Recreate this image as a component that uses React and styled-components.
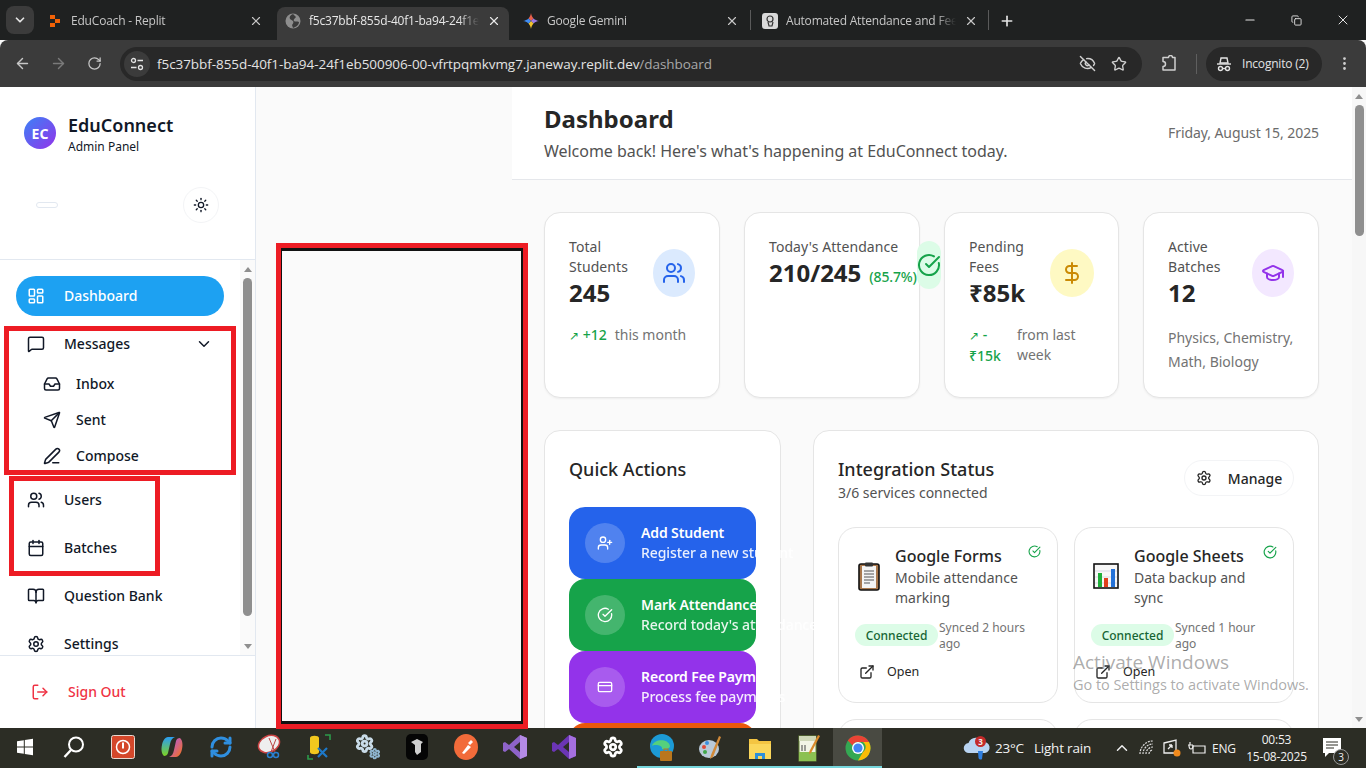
import React from 'react'
import styled, { createGlobalStyle } from 'styled-components'
import {
  ArrowLeft, ArrowRight, RotateCw, EyeOff, Star, MoreVertical, X, Plus, Minus, Copy, ChevronDown, ChevronUp,
  LayoutDashboard, MessageSquare, Inbox, Send, PenLine, Users, Calendar, BookOpen, Settings, LogOut, Sun,
  CircleCheckBig, DollarSign, GraduationCap, UserPlus, CreditCard, ExternalLink, RefreshCw,
} from 'lucide-react'

const GlobalStyle = createGlobalStyle`
  html, body { margin: 0; padding: 0; overflow: hidden; }
  * { box-sizing: border-box; }
  body { font-family: "Noto Sans", sans-serif; }
`

const Screen = styled.div`
  width: 1366px;
  height: 768px;
  display: flex;
  flex-direction: column;
  overflow: hidden;
  position: relative;
  background: #fafafa;
`

/* browser chrome */
const TabStrip = styled.div`
  height: 40px;
  flex: none;
  display: flex;
  align-items: flex-end;
  background: #1f2121;
  font-family: "Open Sans", sans-serif;
`
const TabMenu = styled.div`
  width: 28px;
  height: 28px;
  margin: 0 5px 6px 6px;
  border-radius: 8px;
  background: #3b3b3b;
  color: #e3e3e3;
  display: flex;
  align-items: center;
  justify-content: center;
`
const Tab = styled.div`
  width: 232px;
  height: 33px;
  padding: 0 8px 6px;
  display: flex;
  align-items: center;
  gap: 8px;
  border-radius: 8px 8px 0 0;
  background: ${p => (p.$active ? '#3b3b3b' : 'transparent')};
  color: ${p => (p.$active ? '#e8e8e8' : '#c7c7c7')};
`
const TabTitle = styled.div`
  flex: 1;
  min-width: 0;
  font-size: 12px;
  letter-spacing: -0.2px;
  white-space: nowrap;
  overflow: hidden;
  mask-image: linear-gradient(to right, #000 88%, transparent);
`
const TabGap = styled.div`
  width: ${p => p.$w}px;
  height: 20px;
  margin-bottom: 10px;
  display: flex;
  justify-content: center;
  &::after {
    content: '';
    width: 1px;
    background: ${p => (p.$line ? '#5a5a5a' : 'transparent')};
  }
`
const NewTab = styled.div`
  color: #e3e3e3;
  margin: 0 0 11px 8px;
  display: flex;
`
const WindowButtons = styled.div`
  margin-left: auto;
  align-self: stretch;
  display: flex;
`
const WindowButton = styled.div`
  width: 46.5px;
  display: flex;
  align-items: center;
  justify-content: center;
  color: #e3e3e3;
`
const Toolbar = styled.div`
  height: 47px;
  flex: none;
  display: flex;
  align-items: center;
  padding: 0 0 0 4px;
  background: #3b3b3b;
  border-radius: 8px 8px 0 0;
  color: #c7c7c7;
  font-family: "Open Sans", sans-serif;
`
const ToolButton = styled.div`
  width: 36px;
  display: flex;
  justify-content: center;
  opacity: ${p => (p.$dim ? 0.45 : 1)};
`
const Omnibox = styled.div`
  width: 1022px;
  height: 34px;
  margin-left: 8px;
  display: flex;
  align-items: center;
  border-radius: 17px;
  background: #282828;
  padding: 0 7px 0 4px;
`
const SiteInfo = styled.div`
  width: 26px;
  height: 26px;
  border-radius: 50%;
  background: #3b3b3b;
  display: flex;
  align-items: center;
  justify-content: center;
  color: #e3e3e3;
`
const Url = styled.div`
  margin-left: 7px;
  flex: 1;
  font-size: 13.5px;
  letter-spacing: -0.06px;
  color: #e3e3e3;
  white-space: nowrap;
`
const UrlPath = styled.span`
  color: #a8a8a8;
`
const OmniIcon = styled.div`
  width: 32px;
  display: flex;
  justify-content: center;
  color: #d0d0d0;
`
const ToolIcon = styled.div`
  width: 36px;
  margin-left: ${p => p.$ml}px;
  display: flex;
  justify-content: center;
  color: #d0d0d0;
`
const ToolDivider = styled.div`
  width: 1px;
  height: 20px;
  margin: 0 9px;
  background: #5f5f5f;
`
const IncognitoPill = styled.div`
  width: 116px;
  height: 34px;
  padding-left: 9px;
  display: flex;
  align-items: center;
  gap: 9px;
  border-radius: 17px;
  background: #282828;
  color: #e3e3e3;
  font-size: 12px;
  letter-spacing: -0.2px;
`

/* page */
const Viewport = styled.div`
  flex: 1;
  min-height: 0;
  display: flex;
`
const Sidebar = styled.aside`
  width: 256px;
  flex: none;
  display: flex;
  flex-direction: column;
  background: #fff;
  border-right: 1px solid #e2e8f0;
  color: #111827;
`
const SidebarTop = styled.div`
  height: 173px;
  flex: none;
  padding: 30px 36px 0 24px;
  border-bottom: 1px solid #e2e8f0;
`
const Brand = styled.div`
  display: flex;
  align-items: flex-start;
  gap: 12px;
`
const Avatar = styled.div`
  width: 32px;
  height: 32px;
  border-radius: 50%;
  background: linear-gradient(135deg, #3b82f6, #9333ea);
  color: #fff;
  font-size: 14px;
  font-weight: 700;
  display: flex;
  align-items: center;
  justify-content: center;
`
const BrandName = styled.div`
  font-size: 18px;
  font-weight: 600;
  line-height: 24px;
  margin-top: -4px;
`
const BrandRole = styled.div`
  font-size: 12px;
  line-height: 16px;
  margin-top: 2px;
`
const ThemeRow = styled.div`
  margin-top: 32px;
  padding-left: 12px;
  display: flex;
  align-items: center;
  justify-content: space-between;
`
const EmptyPill = styled.div`
  width: 22px;
  height: 6px;
  border: 1px solid #e2e8f0;
  border-radius: 3px;
`
const ThemeButton = styled.div`
  width: 36px;
  height: 36px;
  border-radius: 50%;
  border: 1px solid #f3f4f6;
  display: flex;
  align-items: center;
  justify-content: center;
`
const NavArea = styled.div`
  flex: 1;
  min-height: 0;
  display: flex;
`
const NavList = styled.nav`
  flex: 1;
  min-width: 0;
  overflow: hidden;
  padding: 16px 16px 0 16px;
  display: flex;
  flex-direction: column;
  gap: 8px;
`
const NavItem = styled.div`
  height: 40px;
  flex: none;
  padding: 0 11px;
  display: flex;
  align-items: center;
  gap: 19px;
  border-radius: 20px;
  font-size: 14px;
  font-weight: 500;
  line-height: 20px;
  background: ${p => (p.$active ? '#1da1f2' : 'transparent')};
  color: ${p => (p.$active ? '#fff' : '#111827')};
`
const NavLabel = styled.span`
  flex: 1;
`
const NavGroup = styled.div`
  position: relative;
  flex: none;
  margin-bottom: -2px;
  &::after {
    content: '';
    box-sizing: border-box;
    position: absolute;
    top: ${p => p.$top}px;
    left: ${p => p.$left}px;
    width: ${p => p.$w}px;
    height: ${p => p.$h}px;
    border: 5px solid #ed1c24;
    pointer-events: none;
  }
`
const SubList = styled.div`
  padding: 2px 0 0 27px;
`
const SubItem = styled.div`
  height: 36px;
  display: flex;
  align-items: center;
  gap: 15px;
  font-size: 14px;
  font-weight: 500;
  line-height: 20px;
`
const PairGroup = styled(NavGroup)`
  display: flex;
  flex-direction: column;
  gap: 8px;
  margin-bottom: 0;
`
const BarTrack = styled.div`
  width: ${p => p.$w}px;
  flex: none;
  display: flex;
  flex-direction: column;
  align-items: center;
  background: ${p => p.$bg};
  color: #8f8f8f;
`
const BarArrow = styled.div`
  height: ${p => p.$h}px;
  flex: none;
  display: flex;
  align-items: center;
`
const BarThumb = styled.div`
  width: 9px;
  height: ${p => p.$h}px;
  flex: none;
  border-radius: 5px;
  background: #8f8f8f;
`
const TriUp = styled.div`
  width: 0;
  height: 0;
  border-left: 4px solid transparent;
  border-right: 4px solid transparent;
  border-bottom: 5px solid #8f8f8f;
`
const TriDown = styled(TriUp)`
  border-bottom: 0;
  border-top: 5px solid #8f8f8f;
`
const BarFill = styled.div`
  flex: 1;
`
const SidebarFooter = styled.div`
  height: 73px;
  flex: none;
  padding: 0 0 0 31px;
  display: flex;
  align-items: center;
  gap: 19px;
  border-top: 1px solid #e2e8f0;
  color: #ef3344;
  font-size: 14px;
  font-weight: 500;
  line-height: 20px;
`
const GapColumn = styled.div`
  width: 256px;
  flex: none;
  padding: 156px 0 0 20px;
`
const BlankFrame = styled.div`
  position: relative;
  z-index: 5;
  width: 252px;
  height: 486px;
  border: 5px solid #ed1c24;
  background: #fafafa;
  box-shadow: inset 1px 3px 0 #111, inset -2px -3px 0 #111;
`
const Main = styled.main`
  flex: 1;
  min-width: 0;
  display: flex;
  flex-direction: column;
  color: #262626;
`
const PageHeader = styled.header`
  height: 93px;
  flex: none;
  padding: 16px 33px 0 32px;
  display: flex;
  justify-content: space-between;
  background: #fff;
  border-bottom: 1px solid #e5e7eb;
`
const PageTitle = styled.h1`
  margin: 0;
  font-size: 24px;
  font-weight: 700;
  line-height: 32px;
`
const PageSub = styled.p`
  margin: 4px 0 0;
  font-size: 16px;
  line-height: 24px;
  letter-spacing: -0.035px;
  color: #525252;
`
const PageDate = styled.div`
  margin-top: 20px;
  font-size: 14px;
  letter-spacing: -0.08px;
  color: #6b6b6b;
`
const Content = styled.div`
  flex: 1;
  min-height: 0;
  padding: 32px 33px 0 32px;
  overflow: hidden;
`
const StatGrid = styled.div`
  display: grid;
  grid-template-columns: 176px 176px 175px 176px;
  gap: 24px;
`
const StatCard = styled.div`
  height: 186px;
  padding: 24px;
  background: #fff;
  border: 1px solid #e5e5e5;
  border-radius: 16px;
  box-shadow: 0 1px 2px rgba(0, 0, 0, 0.05);
`
const StatTop = styled.div`
  display: flex;
  align-items: center;
  justify-content: space-between;
`
const StatLabel = styled.div`
  font-size: 14px;
  line-height: 20px;
  letter-spacing: 0.08px;
  color: #525252;
`
const StatValue = styled.div`
  font-size: 24px;
  font-weight: 700;
  line-height: 32px;
  white-space: nowrap;
`
const StatSuffix = styled.span`
  margin-left: 8px;
  font-size: 14px;
  font-weight: 500;
  letter-spacing: -0.15px;
  color: #16a34a;
`
const StatIcon = styled.div`
  width: ${p => p.$w}px;
  height: 48px;
  flex: none;
  border-radius: 50%;
  background: ${p => p.$bg};
  color: ${p => p.$fg};
  display: flex;
  align-items: center;
  justify-content: center;
`
const AttendanceIcon = styled(StatIcon)`
  border-radius: 12px;
`
const Trend = styled.div`
  margin-top: 16px;
  display: flex;
  gap: 8px;
  font-size: 14px;
  line-height: 20px;
  color: #737373;
`
const TrendValue = styled.span`
  color: #16a34a;
  font-weight: 500;
`
const TrendArrow = styled.span`
  font-size: 12px;
`
const StatNote = styled.div`
  margin-top: 17px;
  font-size: 14px;
  line-height: 24px;
  color: #737373;
`
const BottomGrid = styled.div`
  margin-top: 32px;
  display: grid;
  grid-template-columns: 237px 506px;
  gap: 32px;
  align-items: start;
`
const Panel = styled.section`
  padding: 24px;
  background: #fff;
  border: 1px solid #e5e5e5;
  border-radius: 16px;
`
const PanelTitle = styled.h2`
  margin: 0;
  font-size: 18px;
  font-weight: 500;
  line-height: 28px;
`
const ActionList = styled.div`
  margin-top: 24px;
  display: flex;
  flex-direction: column;
`
const ActionButton = styled.div`
  height: 72px;
  padding: 16px;
  display: flex;
  align-items: center;
  gap: 16px;
  border-radius: 16px;
  background: ${p => p.$bg};
  color: #fff;
  white-space: nowrap;
`
const ActionIcon = styled.div`
  width: 40px;
  height: 40px;
  flex: none;
  border-radius: 50%;
  background: rgba(255, 255, 255, 0.2);
  display: flex;
  align-items: center;
  justify-content: center;
`
const ActionTitle = styled.div`
  font-size: 14px;
  font-weight: 600;
  line-height: 20px;
  letter-spacing: -0.12px;
`
const ActionSub = styled.div`
  font-size: 14px;
  font-weight: 500;
  line-height: 20px;
  letter-spacing: -0.08px;
  opacity: 0.9;
`
const PanelHead = styled.div`
  display: flex;
  align-items: flex-start;
  justify-content: space-between;
`
const PanelSub = styled.div`
  font-size: 14px;
  line-height: 20px;
  color: #525252;
`
const ManageButton = styled.div`
  width: 110px;
  height: 36px;
  margin-top: 5px;
  display: flex;
  align-items: center;
  justify-content: center;
  gap: 16px;
  border: 1px solid #f3f4f6;
  border-radius: 18px;
  font-size: 14px;
  font-weight: 500;
`
const ServiceGrid = styled.div`
  margin-top: 24px;
  display: grid;
  grid-template-columns: 220px 220px;
  gap: 16px;
`
const ServiceCard = styled.div`
  height: 176px;
  padding: 16px;
  border: 1px solid #e5e5e5;
  border-radius: 18px;
`
const ServiceHead = styled.div`
  display: flex;
  align-items: center;
`
const ServiceIcon = styled.div`
  width: ${p => p.$w}px;
  padding-left: ${p => p.$pad}px;
  flex: none;
  display: flex;
`
const ServiceBody = styled.div`
  flex: 1;
  min-width: 0;
`
const ServiceName = styled.div`
  font-size: 16px;
  font-weight: 500;
  line-height: 24px;
`
const ServiceDesc = styled.div`
  font-size: 14px;
  line-height: 20px;
  color: #525252;
`
const ServiceCheck = styled.div`
  flex: none;
  align-self: flex-start;
  margin-top: 1px;
  color: #16a34a;
  display: flex;
`
const ServiceStatus = styled.div`
  margin-top: 12px;
  display: flex;
  align-items: flex-start;
  gap: 1px;
`
const Badge = styled.div`
  width: 83px;
  height: 22px;
  flex: none;
  margin-top: 4px;
  border-radius: 11px;
  background: #dcfce7;
  color: #166534;
  font-size: 12px;
  font-weight: 500;
  display: flex;
  align-items: center;
  justify-content: center;
`
const SyncText = styled.div`
  font-size: 12px;
  line-height: 16px;
  color: #737373;
`
const OpenLink = styled.div`
  margin: 10px 0 0 4px;
  display: flex;
  align-items: center;
  gap: 12px;
  font-size: 12.5px;
  line-height: 20px;
`
const ActivateNotice = styled.div`
  position: absolute;
  left: 1073px;
  top: 649px;
  z-index: 3;
  font-family: "Open Sans", sans-serif;
  color: rgba(120, 120, 120, 0.62);
  pointer-events: none;
`
const ActivateTitle = styled.div`
  font-size: 19px;
  line-height: 26px;
`
const ActivateSub = styled.div`
  font-size: 14.5px;
  line-height: 20px;
  letter-spacing: -0.05px;
  white-space: nowrap;
`

/* windows taskbar */
const Taskbar = styled.footer`
  height: 40px;
  flex: none;
  position: relative;
  z-index: 4;
  display: flex;
  align-items: stretch;
  background: #2c2d25;
  color: #f2f2f2;
  font-family: "Open Sans", sans-serif;
`
const TaskSlot = styled.div`
  width: 49px;
  flex: none;
  display: flex;
  align-items: center;
  justify-content: center;
  background: ${p => (p.$active ? '#494a42' : 'transparent')};
  border-bottom: 2px solid ${p => (p.$open ? '#76d6dc' : 'transparent')};
  padding-top: ${p => (p.$open ? '2px' : '0')};
`
const Tray = styled.div`
  margin-left: auto;
  display: flex;
  align-items: center;
  font-size: 13px;
  letter-spacing: -0.2px;
`
const Weather = styled.div`
  position: relative;
  display: flex;
  margin-right: 4px;
`
const CountDot = styled.div`
  position: absolute;
  top: 1px;
  right: 5px;
  width: 11px;
  height: 11px;
  border-radius: 50%;
  background: #c42b2b;
  font-size: 8px;
  font-weight: 700;
  line-height: 11px;
  text-align: center;
`
const WeatherText = styled.div`
  width: 114px;
  display: flex;
  gap: 10px;
  font-size: 13.5px;
  white-space: nowrap;
`
const TrayIcon = styled.div`
  width: 25px;
  display: flex;
  justify-content: center;
  color: #eee;
`
const TrayLang = styled.div`
  width: 30px;
  margin-left: 3px;
  font-size: 12px;
`
const Clock = styled.div`
  width: 68px;
  padding-left: 1px;
  text-align: center;
  font-size: 12px;
  line-height: 17px;
`
const Notify = styled.div`
  position: relative;
  width: 40px;
  margin-left: 2px;
  margin-right: 14px;
  display: flex;
  justify-content: center;
`
const NotifyCount = styled.div`
  position: absolute;
  right: 3px;
  bottom: -7px;
  width: 16px;
  height: 16px;
  border-radius: 50%;
  border: 1px solid #999;
  background: #2c2d25;
  font-size: 10px;
  line-height: 14px;
  text-align: center;
`

const TabDot = () => (
  <svg width="16" height="16" viewBox="0 0 16 16">
    <path d="M3 2h5v4H3zM8 6h5v4H8zM3 10h5v4H3z" fill="#f26207" />
  </svg>
)
const GlobeMark = () => (
  <svg width="16" height="16" viewBox="0 0 16 16">
    <circle cx="8" cy="8" r="7.500" fill="#8e8e8e" />
    <path d="M8 1c-3 1-4 3-3 5l3 2c1 1 0 3-1 4l1 3c3-1 6-3 6-6-2-1-4 0-5-1s1-3 2-4z" fill="#3b3b3b" />
  </svg>
)
const GeminiMark = () => (
  <svg width="16" height="16" viewBox="0 0 16 16">
    <path d="M8 0c.3 2.200 1.200 4 2.500 5.500L8 8 5.500 5.500C6.800 4 7.700 2.200 8 0z" fill="#e8604c" />
    <path d="M16 8c-2.200.3-4 1.200-5.500 2.500L8 8l2.500-2.500C12 6.800 13.800 7.700 16 8z" fill="#9a7be8" />
    <path d="M8 16c-.3-2.200-1.200-4-2.500-5.500L8 8l2.500 2.500C9.200 12 8.300 13.800 8 16z" fill="#f0c22e" />
    <path d="M0 8c2.200-.3 4-1.200 5.500-2.500L8 8l-2.500 2.500C4 9.200 2.200 8.300 0 8z" fill="#3f8cf3" />
  </svg>
)
const ChatMark = () => (
  <svg width="16" height="16" viewBox="0 0 16 16">
    <rect width="16" height="16" rx="3" fill="#d9d9d9" />
    <circle cx="8" cy="6" r="3" fill="none" stroke="#333" strokeWidth="1.2" />
    <path d="M6 9l1 4h3l1-4" fill="none" stroke="#333" strokeWidth="1.2" />
  </svg>
)
const TuneMark = () => (
  <svg width="14" height="14" viewBox="0 0 14 14" fill="none" stroke="#e3e3e3" strokeWidth="1.300">
    <circle cx="3.500" cy="3.500" r="2" />
    <path d="M7.500 3.500H13M1 10.500h5.500" />
    <circle cx="10.500" cy="10.500" r="2" />
  </svg>
)
const ExtensionMark = () => (
  <svg width="18" height="18" viewBox="0 0 18 18" fill="none" stroke="#d0d0d0" strokeWidth="1.500">
    <path d="M3 2.500h5.500a2 2 0 0 1 4 0H15v12.500H3v-3.500a2.500 2.500 0 0 0 0-5z" strokeLinejoin="round" />
  </svg>
)
const IncognitoMark = () => (
  <svg width="18" height="18" viewBox="0 0 18 18" fill="none" stroke="#e3e3e3" strokeWidth="1.4">
    <path d="M6 3h6l1 5H5z" />
    <path d="M2 9h14" />
    <circle cx="5.5" cy="13.5" r="2" />
    <circle cx="12.5" cy="13.5" r="2" />
    <path d="M7.5 13.5h3" />
  </svg>
)
const ClipboardEmoji = () => (
  <svg width="28" height="30" viewBox="0 0 28 30">
    <rect x="4" y="3" width="20" height="26" rx="2" fill="#a9784c" stroke="#111" strokeWidth="1.6" />
    <rect x="7" y="5" width="14" height="22" fill="#f4f4f4" />
    <rect x="10" y="1.5" width="8" height="4" rx="1" fill="#333" />
    <path d="M9 10h10M9 13h10M9 16h10M9 19h10M9 22h6" stroke="#555" strokeWidth="1.1" />
  </svg>
)
const ChartEmoji = () => (
  <svg width="26" height="26" viewBox="0 0 26 26">
    <rect x="1" y="1" width="24" height="24" fill="#f7f7f7" stroke="#111" strokeWidth="1.6" />
    <path d="M2 8h22M2 14h22M2 20h22" stroke="#ccd" strokeWidth="0.7" />
    <rect x="5" y="10" width="4" height="14" fill="#1fae3a" />
    <rect x="11" y="15" width="4" height="9" fill="#e0401c" />
    <rect x="18" y="6" width="4" height="18" fill="#2472d8" />
  </svg>
)

const WinLogo = () => (
  <svg width="18" height="18" viewBox="0 0 18 18" fill="#fff">
    <path d="M1 3.2l6.8-1V8.500H1zM8.800 2l8.200-1.200V8.500H8.800zM1 9.500h6.800v6.300l-6.800-1zM8.800 9.500H17v7.700L8.800 16z" />
  </svg>
)
const SearchMark = () => (
  <svg width="24" height="24" viewBox="0 0 24 24" fill="none" stroke="#fff" strokeWidth="2">
    <circle cx="14" cy="9.500" r="7" />
    <path d="M9 15l-6.500 7" strokeWidth="2.400" />
  </svg>
)
const PowerTile = () => (
  <svg width="24" height="24" viewBox="0 0 24 24" fill="none">
    <rect x="0.500" y="0.500" width="23" height="23" rx="2" fill="#d4472a" stroke="#e8d8d0" />
    <circle cx="12" cy="12" r="6.500" stroke="#fff" strokeWidth="1.500" />
    <path d="M12 7.500v6" stroke="#fff" strokeWidth="2" />
  </svg>
)
const CopilotMark = () => (
  <svg width="24" height="24" viewBox="0 0 24 24">
    <defs>
      <linearGradient id="cpa" x1="0" y1="0" x2="0" y2="1">
        <stop offset="0" stopColor="#2a9df4" />
        <stop offset="1" stopColor="#7ed321" />
      </linearGradient>
      <linearGradient id="cpb" x1="0" y1="0" x2="1" y2="1">
        <stop offset="0" stopColor="#a855f7" />
        <stop offset="1" stopColor="#f97316" />
      </linearGradient>
    </defs>
    <path d="M8 2h7c-3 1-4 3-5 7l-2 9c-.500 2-2 3-4 3-2.500-2-3-7-2-11 .7-4 3-8 6-8z" fill="url(#cpa)" />
    <path d="M16 22H9c3-1 4-3 5-7l2-9c.500-2 2-3 4-3 2.500 2 3 7 2 11-.7 4-3 8-6 8z" fill="url(#cpb)" />
  </svg>
)
const SnipMark = () => (
  <svg width="26" height="26" viewBox="0 0 26 26" fill="none">
    <ellipse cx="12" cy="10" rx="11" ry="8" transform="rotate(-25 12 10)" fill="#eee" stroke="#c44" strokeWidth="1.500" />
    <path d="M12 4l6 14M19 5l-5 13" stroke="#b44" strokeWidth="1" />
    <circle cx="13" cy="21" r="2.500" stroke="#2a7fd0" strokeWidth="1.500" />
    <circle cx="19" cy="21" r="2.500" stroke="#2a7fd0" strokeWidth="1.500" />
  </svg>
)
const SqlMark = () => (
  <svg width="24" height="26" viewBox="0 0 24 26" fill="none">
    <path d="M3 4c0-3 9-3 9 0v14c0 3-9 3-9 0z" fill="#f2c81e" />
    <path d="M1 21v4h5M18 1h5v5" stroke="#2c9a4a" strokeWidth="1.600" />
    <path d="M11 14l9 9M20 14l-9 9" stroke="#1e78c8" strokeWidth="2.200" />
  </svg>
)
const GearsMark = () => (
  <svg width="26" height="26" viewBox="0 0 26 26">
    <g transform="scale(0.8)">
      <Settings size={24} color="#c9dbe8" strokeWidth={3.500} />
    </g>
    <g transform="translate(14 14) scale(0.48)">
      <Settings size={24} color="#8fb6d0" strokeWidth={4} />
    </g>
  </svg>
)
const CubeTile = () => (
  <svg width="22" height="26" viewBox="0 0 22 26">
    <rect width="22" height="26" rx="5" fill="#050505" />
    <path d="M5 8l6-3 6 3-2 2v8l-4 3-2-3v-7z" fill="#cfcfcf" />
  </svg>
)
const PostmanMark = () => (
  <svg width="24" height="26" viewBox="0 0 24 26">
    <ellipse cx="12" cy="13" rx="12" ry="13" fill="#f26b3a" />
    <path d="M8 19l6-8 3 2-7 7z M14 9l3-3 2 2-3 3z" fill="#fff" />
  </svg>
)
const VsMark = ({ light }) => (
  <svg width="24" height="26" viewBox="0 0 24 26">
    <path d="M17 1l7 3v18l-7 3-11-10-4 3-2-1V9l2-1 4 3z" fill={light ? '#8e63c9' : '#6b35b5'} />
    <path d="M17 1l7 3v18l-7 3z" fill={light ? '#b48ae6' : '#a56fe0'} />
    <path d="M17 8v10l-6-5z" fill="#2c2d25" />
  </svg>
)
const EdgeMark = () => (
  <svg width="26" height="28" viewBox="0 0 26 28">
    <circle cx="13" cy="12" r="12" fill="#1c9ad6" />
    <path d="M3 12c2-7 16-8 18 0 0 3-5 4-8 3 1-4-8-5-10-3z" fill="#55d07c" />
    <rect x="11" y="17" width="12" height="10" rx="1" fill="#b9761d" />
    <rect x="15" y="15" width="4" height="3" fill="none" stroke="#b9761d" />
  </svg>
)
const PaletteMark = () => (
  <svg width="26" height="26" viewBox="0 0 26 26">
    <ellipse cx="11" cy="14" rx="10" ry="9" fill="#b9c9d9" />
    <circle cx="6" cy="12" r="2" fill="#e04a3a" />
    <circle cx="9" cy="8" r="2" fill="#3a8fe0" />
    <circle cx="7" cy="17" r="2" fill="#41a64a" />
    <path d="M21 1l2 1-8 20-3 2 1-4z" fill="#d18a3a" />
  </svg>
)
const FolderMark = () => (
  <svg width="24" height="24" viewBox="0 0 24 24">
    <path d="M1 3h8l2 2h12v18H1z" fill="#f4c542" />
    <path d="M1 8h22v15H1z" fill="#fbd75b" />
    <path d="M7 17h10v6h-3v-3h-4v3H7z" fill="#2e8fd8" />
  </svg>
)
const NotepadMark = () => (
  <svg width="24" height="28" viewBox="0 0 24 28">
    <rect x="2" y="2" width="17" height="25" fill="#f2f5e6" stroke="#6b8a3a" />
    <rect x="2" y="2" width="17" height="5" fill="#cfd8b8" />
    <path d="M2 18h17v9H2z" fill="#8cc152" />
    <path d="M5 11v6M8 11v6" stroke="#444" />
    <path d="M21 1l2 1-9 17-2 1 .5-3z" fill="#d98a2b" />
  </svg>
)
const ChromeMark = () => (
  <svg width="26" height="26" viewBox="0 0 26 26">
    <circle cx="13" cy="13" r="12.500" fill="#34a853" />
    <path d="M13 .5A12.500 12.500 0 0 1 24 7H13a6 6 0 0 0-5.500 3.500L2.800 5.500A12.500 12.500 0 0 1 13 .5z" fill="#ea4335" />
    <path d="M24 7a12.500 12.500 0 0 1-11 18.500l5-8.500a6 6 0 0 0 0-10z" fill="#fbbc05" />
    <circle cx="13" cy="13" r="6" fill="#fff" />
    <circle cx="13" cy="13" r="4.600" fill="#4285f4" />
  </svg>
)
const CloudMark = () => (
  <svg width="28" height="26" viewBox="0 0 28 26">
    <path d="M6 18a5 5 0 0 1-.5-10A8 8 0 0 1 20 7a5.500 5.500 0 0 1 2 11z" fill="#b9d4f2" />
    <path d="M15 16h5l-1 8a2.200 2.200 0 0 1-3.500-1z" fill="#2f7fe0" />
  </svg>
)
const WifiMark = () => (
  <svg width="18" height="18" viewBox="0 0 18 18" fill="none" stroke="#ddd" strokeWidth="1.200">
    <path d="M2 15A13 13 0 0 1 15 2M5 15A10 10 0 0 1 15 5M8 15a7 7 0 0 1 7-7M11 15a4 4 0 0 1 4-4" strokeDasharray="2 1" />
  </svg>
)
const DisplayMark = () => (
  <svg width="20" height="20" viewBox="0 0 20 20" fill="none" stroke="#eee" strokeWidth="1.300">
    <path d="M2 5l12-3v13H2z" />
    <path d="M6 11l4-4M10 7H7M10 7v3" />
    <circle cx="15" cy="15" r="3.500" fill="#f08a1d" stroke="none" />
  </svg>
)
const PowerMark = () => (
  <svg width="20" height="16" viewBox="0 0 20 16" fill="none" stroke="#eee" strokeWidth="1.200">
    <path d="M6 6h12v7H6z" />
    <path d="M1 5h5M3 2v3M2 5c0 3 1 4 2 4M6 5c0 3-1 4-2 4" />
  </svg>
)
const NotifyMark = () => (
  <svg width="18" height="20" viewBox="0 0 18 20">
    <path d="M0 0h18v15H6l-4 4v-4H0z" fill="#fff" />
    <path d="M3 4h12M3 7h12M3 10h8" stroke="#2c2d25" strokeWidth="1" />
  </svg>
)

const taskIcons = [
  { key: 'win', node: <WinLogo /> },
  { key: 'search', node: <SearchMark /> },
  { key: 'power', node: <PowerTile /> },
  { key: 'copilot', node: <CopilotMark /> },
  { key: 'sync', node: <RefreshCw size={24} color="#2f8fe0" strokeWidth={3} /> },
  { key: 'snip', node: <SnipMark /> },
  { key: 'sql', node: <SqlMark /> },
  { key: 'gears', node: <GearsMark /> },
  { key: 'cube', node: <CubeTile /> },
  { key: 'postman', node: <PostmanMark /> },
  { key: 'vs1', node: <VsMark light /> },
  { key: 'vs2', node: <VsMark /> },
  { key: 'gear', node: <Settings size={22} color="#fff" strokeWidth={3} /> },
  { key: 'edge', node: <EdgeMark />, open: true },
  { key: 'palette', node: <PaletteMark />, open: true },
  { key: 'folder', node: <FolderMark />, open: true },
  { key: 'notepad', node: <NotepadMark />, open: true },
  { key: 'chrome', node: <ChromeMark />, open: true, active: true },
]

const stats = [
  { label: 'Total Students', value: '245', icon: <Users size={24} />, bg: '#dbeafe', fg: '#2563eb', trend: '+12', note: 'this month' },
  { label: 'Pending Fees', value: '₹85k', icon: <DollarSign size={24} />, bg: '#fef9c3', fg: '#ca8a04', trend: '-₹15k', note: 'from last week', w: 44 },
]

const actions = [
  { title: 'Add Student', sub: 'Register a new student', bg: '#2563eb', icon: <UserPlus size={16} /> },
  { title: 'Mark Attendance', sub: "Record today's attendance", bg: '#16a34a', icon: <CircleCheckBig size={16} /> },
  { title: 'Record Fee Payment', sub: 'Process fee payments', bg: '#9333ea', icon: <CreditCard size={16} /> },
]

const services = [
  { name: 'Google Forms', desc: 'Mobile attendance marking', sync: 'Synced 2 hours ago', icon: <ClipboardEmoji />, w: 40, pad: 0, check: 13 },
  { name: 'Google Sheets', desc: 'Data backup and sync', sync: 'Synced 1 hour ago', icon: <ChartEmoji />, w: 43, pad: 2, check: 14 },
]

const StatBlock = ({ stat }) => (
  <StatCard>
    <StatTop>
      <div>
        <StatLabel>{stat.label}</StatLabel>
        <StatValue>{stat.value}</StatValue>
      </div>
      <StatIcon $w={stat.w || 42} $bg={stat.bg} $fg={stat.fg}>{stat.icon}</StatIcon>
    </StatTop>
    <Trend>
      <TrendValue><TrendArrow>↗</TrendArrow> {stat.trend}</TrendValue>
      <span>{stat.note}</span>
    </Trend>
  </StatCard>
)

const App = () => {
  return (
    <Screen>
      <GlobalStyle />
      <TabStrip>
        <TabMenu><ChevronDown size={14} strokeWidth={3} /></TabMenu>
        <Tab>
          <TabDot />
          <TabTitle>EduCoach - Replit</TabTitle>
          <X size={14} />
        </Tab>
        <TabGap $w={6} />
        <Tab $active>
          <GlobeMark />
          <TabTitle>f5c37bbf-855d-40f1-ba94-24f1eb500906-00</TabTitle>
          <X size={14} />
        </Tab>
        <TabGap $w={6} />
        <Tab>
          <GeminiMark />
          <TabTitle>Google Gemini</TabTitle>
          <X size={14} />
        </Tab>
        <TabGap $w={7} $line />
        <Tab>
          <ChatMark />
          <TabTitle>Automated Attendance and Fee Tracking</TabTitle>
          <X size={14} />
        </Tab>
        <TabGap $w={5} $line />
        <NewTab><Plus size={16} strokeWidth={2.5} /></NewTab>
        <WindowButtons>
          <WindowButton><Minus size={14} /></WindowButton>
          <WindowButton><Copy size={11} /></WindowButton>
          <WindowButton><X size={16} strokeWidth={1.5} /></WindowButton>
        </WindowButtons>
      </TabStrip>
      <Toolbar>
        <ToolButton><ArrowLeft size={17} /></ToolButton>
        <ToolButton $dim><ArrowRight size={17} /></ToolButton>
        <ToolButton><RotateCw size={15} /></ToolButton>
        <Omnibox>
          <SiteInfo><TuneMark /></SiteInfo>
          <Url>f5c37bbf-855d-40f1-ba94-24f1eb500906-00-vfrtpqmkvmg7.janeway.replit.dev<UrlPath>/dashboard</UrlPath></Url>
          <OmniIcon><EyeOff size={17} /></OmniIcon>
          <OmniIcon><Star size={16} /></OmniIcon>
        </Omnibox>
        <ToolIcon $ml={9}><ExtensionMark /></ToolIcon>
        <ToolDivider />
        <IncognitoPill><IncognitoMark />Incognito (2)</IncognitoPill>
        <ToolIcon $ml={4}><MoreVertical size={17} /></ToolIcon>
      </Toolbar>

      <Viewport>
        <Sidebar>
          <SidebarTop>
            <Brand>
              <Avatar>EC</Avatar>
              <div>
                <BrandName>EduConnect</BrandName>
                <BrandRole>Admin Panel</BrandRole>
              </div>
            </Brand>
            <ThemeRow>
              <EmptyPill />
              <ThemeButton><Sun size={16} /></ThemeButton>
            </ThemeRow>
          </SidebarTop>
          <NavArea>
            <NavList>
              <NavItem $active><LayoutDashboard size={18} /><NavLabel>Dashboard</NavLabel></NavItem>
              <NavGroup $top={2} $left={-12} $w={232} $h={149}>
                <NavItem>
                  <MessageSquare size={18} />
                  <NavLabel>Messages</NavLabel>
                  <ChevronDown size={18} />
                </NavItem>
                <SubList>
                  <SubItem><Inbox size={18} />Inbox</SubItem>
                  <SubItem><Send size={18} />Sent</SubItem>
                  <SubItem><PenLine size={18} />Compose</SubItem>
                </SubList>
              </NavGroup>
              <PairGroup $top={-4} $left={-7} $w={151} $h={100}>
                <NavItem><Users size={18} /><NavLabel>Users</NavLabel></NavItem>
                <NavItem><Calendar size={18} /><NavLabel>Batches</NavLabel></NavItem>
              </PairGroup>
              <NavItem><BookOpen size={18} /><NavLabel>Question Bank</NavLabel></NavItem>
              <NavItem><Settings size={18} /><NavLabel>Settings</NavLabel></NavItem>
            </NavList>
            <BarTrack $w={15} $bg="#fafafa">
              <BarArrow $h={18}><TriUp /></BarArrow>
              <BarThumb $h={338} />
              <BarFill />
              <BarArrow $h={18}><TriDown /></BarArrow>
            </BarTrack>
          </NavArea>
          <SidebarFooter><LogOut size={18} />Sign Out</SidebarFooter>
        </Sidebar>

        <GapColumn>
          <BlankFrame />
        </GapColumn>

        <Main>
          <PageHeader>
            <div>
              <PageTitle>Dashboard</PageTitle>
              <PageSub>Welcome back! Here's what's happening at EduConnect today.</PageSub>
            </div>
            <PageDate>Friday, August 15, 2025</PageDate>
          </PageHeader>
          <Content>
            <StatGrid>
              <StatBlock stat={stats[0]} />
              <StatCard>
                <StatTop>
                  <div>
                    <StatLabel>Today's Attendance</StatLabel>
                    <StatValue>210/245<StatSuffix>(85.7%)</StatSuffix></StatValue>
                  </div>
                  <AttendanceIcon $w={24} $bg="#dcfce7" $fg="#16a34a"><CircleCheckBig size={24} /></AttendanceIcon>
                </StatTop>
              </StatCard>
              <StatBlock stat={stats[1]} />
              <StatCard>
                <StatTop>
                  <div>
                    <StatLabel>Active Batches</StatLabel>
                    <StatValue>12</StatValue>
                  </div>
                  <StatIcon $w={42} $bg="#f3e8ff" $fg="#9333ea"><GraduationCap size={24} /></StatIcon>
                </StatTop>
                <StatNote>Physics, Chemistry, Math, Biology</StatNote>
              </StatCard>
            </StatGrid>

            <BottomGrid>
              <Panel>
                <PanelTitle>Quick Actions</PanelTitle>
                <ActionList>
                  {actions.map(a => (
                    <ActionButton key={a.title} $bg={a.bg}>
                      <ActionIcon>{a.icon}</ActionIcon>
                      <div>
                        <ActionTitle>{a.title}</ActionTitle>
                        <ActionSub>{a.sub}</ActionSub>
                      </div>
                    </ActionButton>
                  ))}
                  <ActionButton $bg="#ea580c" />
                </ActionList>
              </Panel>
              <Panel>
                <PanelHead>
                  <div>
                    <PanelTitle>Integration Status</PanelTitle>
                    <PanelSub>3/6 services connected</PanelSub>
                  </div>
                  <ManageButton><Settings size={16} />Manage</ManageButton>
                </PanelHead>
                <ServiceGrid>
                  {services.map(s => (
                    <ServiceCard key={s.name}>
                      <ServiceHead>
                        <ServiceIcon $w={s.w} $pad={s.pad}>{s.icon}</ServiceIcon>
                        <ServiceBody>
                          <ServiceName>{s.name}</ServiceName>
                          <ServiceDesc>{s.desc}</ServiceDesc>
                        </ServiceBody>
                        <ServiceCheck><CircleCheckBig size={s.check} /></ServiceCheck>
                      </ServiceHead>
                      <ServiceStatus>
                        <Badge>Connected</Badge>
                        <SyncText>{s.sync}</SyncText>
                      </ServiceStatus>
                      <OpenLink><ExternalLink size={16} />Open</OpenLink>
                    </ServiceCard>
                  ))}
                  <ServiceCard />
                  <ServiceCard />
                </ServiceGrid>
              </Panel>
            </BottomGrid>
          </Content>
        </Main>

        <BarTrack $w={14} $bg="#f7f7f7">
          <BarArrow $h={18}><TriUp /></BarArrow>
          <BarThumb $h={131} />
          <BarFill />
          <BarArrow $h={18}><TriDown /></BarArrow>
        </BarTrack>
      </Viewport>

      <ActivateNotice>
        <ActivateTitle>Activate Windows</ActivateTitle>
        <ActivateSub>Go to Settings to activate Windows.</ActivateSub>
      </ActivateNotice>

      <Taskbar>
        {taskIcons.map(t => (
          <TaskSlot key={t.key} $open={t.open} $active={t.active}>{t.node}</TaskSlot>
        ))}
        <Tray>
          <Weather>
            <CloudMark />
            <CountDot>3</CountDot>
          </Weather>
          <WeatherText><span>23°C</span><span>Light rain</span></WeatherText>
          <TrayIcon><ChevronUp size={18} /></TrayIcon>
          <TrayIcon><WifiMark /></TrayIcon>
          <TrayIcon><DisplayMark /></TrayIcon>
          <TrayIcon><PowerMark /></TrayIcon>
          <TrayLang>ENG</TrayLang>
          <Clock>
            <div>00:53</div>
            <div>15-08-2025</div>
          </Clock>
          <Notify>
            <NotifyMark />
            <NotifyCount>3</NotifyCount>
          </Notify>
        </Tray>
      </Taskbar>
    </Screen>
  )
}

export default App
